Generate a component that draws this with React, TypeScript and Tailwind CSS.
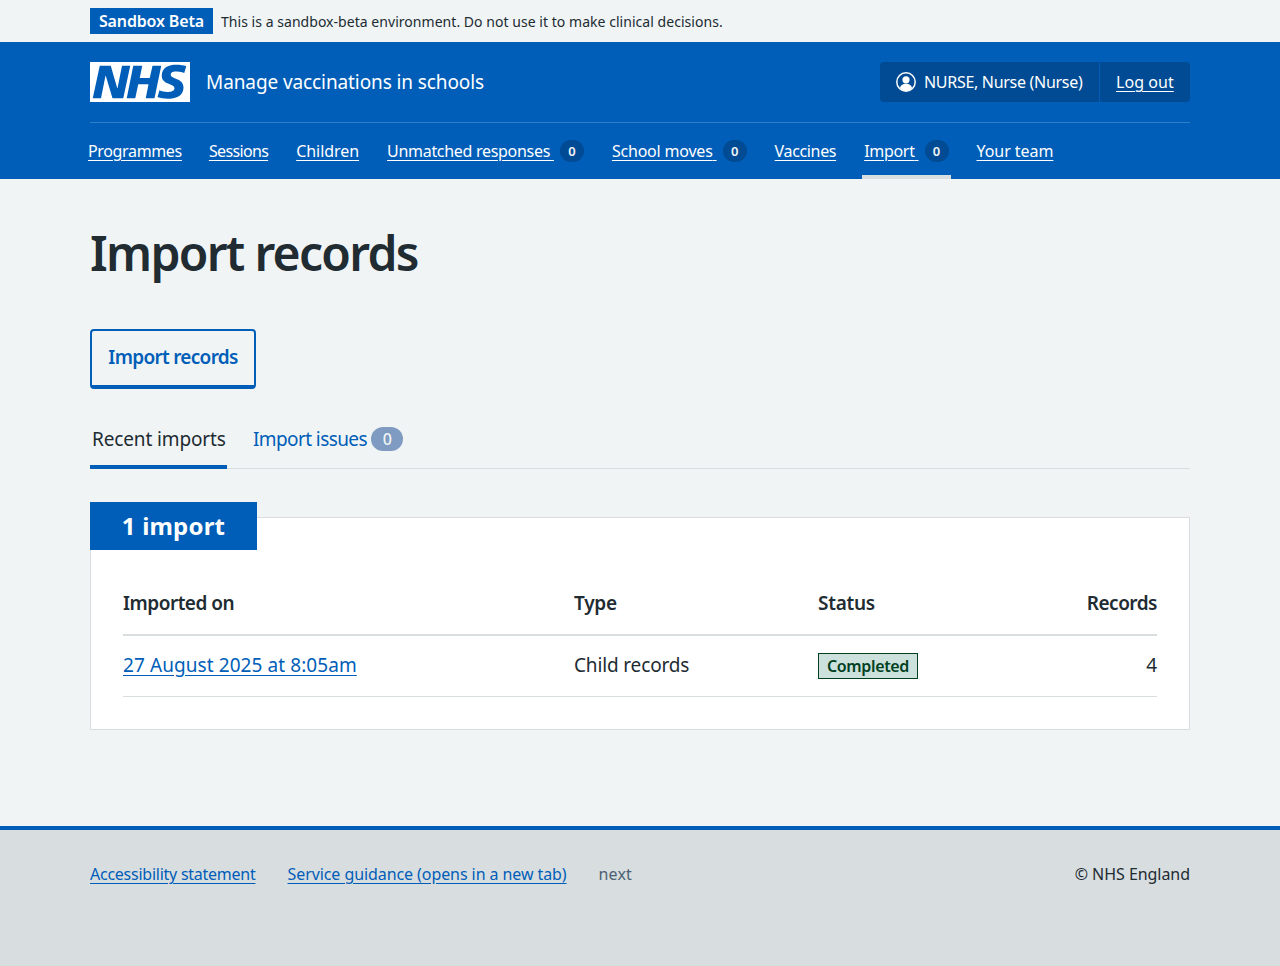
function Count({ n }: { n: number }) {
  return (
    <span className="flex h-[22px] w-6 items-center justify-center rounded-full bg-[#004b93] text-[13px] leading-none font-semibold text-[#f0f4f5]">
      {n}
    </span>
  );
}

function NavItem({
  label,
  count,
  active,
  className,
  linkClass,
}: {
  label: string;
  count?: number;
  active?: boolean;
  className?: string;
  linkClass: string;
}) {
  return (
    <div className={`flex h-[56px] items-center gap-[6px] ${active ? "border-b-4 border-[#d8dde0] pt-[4px]" : ""} ${className ?? ""}`}>
      <a href="#" className={`text-[16px] leading-6 whitespace-pre text-white underline underline-offset-[3px] ${linkClass}`}>
        {label}
        {count !== undefined ? " " : ""}
      </a>
      {count !== undefined && <Count n={count} />}
    </div>
  );
}

export default function App() {
  return (
    <div className="flex min-h-[966px] flex-col bg-[#f0f4f5] [font-family:'Noto_Sans',sans-serif] text-[#212b32]">
      {/* Environment banner */}
      <div className="flex h-[42px] items-center gap-2 px-[90px] pb-[1px]">
        <span className="flex h-[26px] w-[123px] items-center justify-center bg-[#005eb8] text-[16px] font-semibold tracking-[-0.15px] text-white">
          Sandbox Beta
        </span>
        <span className="mt-[2px] text-[14px] tracking-[0.04px] text-[#212b32]">
          This is a sandbox-beta environment. Do not use it to make clinical decisions.
        </span>
      </div>

      {/* Header */}
      <header className="h-[137px] bg-[#005eb8] px-[90px] pt-5">
        <div className="flex h-[61px] items-start justify-between border-b border-[#2e7fc9]">
          <div className="flex items-center gap-4">
            <svg viewBox="0 0 40 16" width="100" height="40" aria-label="NHS">
              <path fill="#fff" d="M0 0h40v16H0z" />
              <path
                fill="#005eb8"
                d="M3.9 1.5h4.4l2.6 9h.1l1.8-9h3.3l-2.8 13H9l-2.7-9h-.1l-1.8 9H1.1M17.3 1.5h3.6l-1 4.9h4L25 1.5h3.5l-2.7 13h-3.5l1.1-5.6h-4.1l-1.2 5.6h-3.4M37.7 4.4c-.7-.3-1.6-.6-2.9-.6-1.4 0-2.5.2-2.5 1.3 0 1.8 5.1 1.2 5.1 5.1 0 3.6-3.3 4.5-6.4 4.5-1.3 0-2.9-.3-4-.7l.8-2.7c.7.4 2.1.7 3.2.7s2.8-.2 2.8-1.5c0-2.1-5.1-1.3-5.1-5 0-3.4 2.9-4.4 5.8-4.4 1.6 0 3.1.2 4 .6"
              />
            </svg>
            <span className="pb-[1px] text-[19px] leading-6 tracking-[-0.1px] text-white">Manage vaccinations in schools</span>
          </div>
          <div className="flex h-10 w-[310px] rounded bg-[#004b93] text-[16px] text-white">
            <div className="flex w-[220px] items-center gap-2 border-r border-[#005eb8] pl-4 tracking-[-0.3px]">
              <svg viewBox="0 0 20 20" width="20" height="20" aria-hidden="true">
                <circle cx="10" cy="10" r="9.2" fill="none" stroke="#fff" strokeWidth="1.5" />
                <circle cx="10" cy="7.8" r="3.6" fill="#fff" />
                <path fill="#fff" d="M3.9 16c.7-3 3-4.300 6.100-4.300s5.400 1.300 6.100 4.300A8.700 8.700 0 0 1 10 19.200a8.700 8.700 0 0 1-6.100-3.200z" />
              </svg>
              <span>NURSE, Nurse (Nurse)</span>
            </div>
            <div className="flex flex-1 items-center pl-4 tracking-[0.05px]">
              <a href="#" className="underline underline-offset-[3px]">Log out</a>
            </div>
          </div>
        </div>
        <nav className="-ml-[2px] flex">
          <NavItem label="Programmes" linkClass="tracking-[-0.35px]" />
          <NavItem label="Sessions" className="ml-[27px]" linkClass="tracking-[-0.65px]" />
          <NavItem label="Children" className="ml-[28px]" linkClass="tracking-[-0.05px]" />
          <NavItem label="Unmatched responses" count={0} className="ml-[28px]" linkClass="tracking-[-0.3px]" />
          <NavItem label="School moves" count={0} className="ml-[28px]" linkClass="tracking-[-0.2px]" />
          <NavItem label="Vaccines" className="ml-[28px]" linkClass="tracking-[-0.35px]" />
          <NavItem label="Import" count={0} active className="ml-[26px] px-[2px]" linkClass="tracking-[-0.3px]" />
          <NavItem label="Your team" className="ml-[26px]" linkClass="tracking-[-0.05px]" />
        </nav>
      </header>

      {/* Main */}
      <main className="flex-1 px-[90px]">
        <h1 className="mt-[42px] text-[48px] leading-[64px] font-semibold tracking-[-1.7px]">Import records</h1>

        <a
          href="#"
          className="mt-[44px] flex h-[60px] w-[166px] items-center justify-center rounded border-2 border-b-4 border-[#005eb8] pb-[2px] text-[19px] font-semibold tracking-[-0.7px] text-[#005eb8]"
        >
          Import records
        </a>

        {/* Tabs */}
        <div className="mt-[31px] flex h-[49px] border-b border-[#d8dde0]">
          <div className="h-[49px] w-[137px] border-b-4 border-[#005eb8] pt-[7px] pl-[2px] text-[19px] leading-6 tracking-[-0.13px]">
            Recent imports
          </div>
          <div className="ml-[26px] flex h-6 items-center gap-[4px] pt-[14px] text-[19px] tracking-[-0.6px] text-[#005eb8]">
            <a href="#">Import issues</a>
            <span className="flex h-6 w-[32px] items-center justify-center rounded-full bg-[#7f9bc1] text-[16px] font-medium text-[#f0f4f5]">0</span>
          </div>
        </div>

        {/* Card */}
        <section className="mt-[48px] h-[213px] border border-[#d8dde0] bg-white px-8">
          <h2 className="-mt-4 -ml-[33px] flex h-12 w-[167px] items-center justify-center bg-[#005eb8] pb-[1px] text-[24px] font-bold tracking-[0.2px] text-white">
            1 import
          </h2>
          <table className="mt-[22px] w-full table-fixed border-collapse text-[19px]">
            <thead>
              <tr className="h-[63px] border-b-2 border-[#d8dde0]">
                <th className="w-[451px] text-left font-semibold tracking-[-0.5px]">Imported on</th>
                <th className="w-[244px] text-left font-semibold tracking-[-0.25px]">Type</th>
                <th className="text-left font-semibold tracking-[-0.25px]">Status</th>
                <th className="text-right font-semibold tracking-[-0.5px]">Records</th>
              </tr>
            </thead>
            <tbody>
              <tr className="h-[61px] border-b border-[#d8dde0]">
                <td className="pb-[2px]">
                  <a href="#" className="tracking-[0.08px] text-[#005eb8] underline underline-offset-[3px]">27 August 2025 at 8:05am</a>
                </td>
                <td className="pb-[2px] tracking-[-0.15px]">Child records</td>
                <td className="pb-[2px]">
                  <span className="inline-flex h-[26px] w-[100px] items-center justify-center border border-[#00401e] bg-[#cce0dc] pb-[1px] text-[16px] font-semibold tracking-[-0.35px] text-[#00401e]">
                    Completed
                  </span>
                </td>
                <td className="pb-[2px] text-right">4</td>
              </tr>
            </tbody>
          </table>
        </section>
      </main>

      {/* Footer */}
      <footer className="flex h-[140px] items-start justify-between border-t-4 border-[#005eb8] bg-[#d8dde0] px-[90px] pt-[32px] text-[16px]">
        <div className="flex gap-8">
          <a href="#" className="tracking-[-0.25px] text-[#005eb8] underline underline-offset-[3px]">Accessibility statement</a>
          <a href="#" className="tracking-[-0.08px] text-[#005eb8] underline underline-offset-[3px]">Service guidance (opens in a new tab)</a>
          <span className="tracking-[0.1px] text-[#4c6272]">next</span>
        </div>
        <span className="tracking-[-0.05px]">© NHS England</span>
      </footer>
    </div>
  );
}
